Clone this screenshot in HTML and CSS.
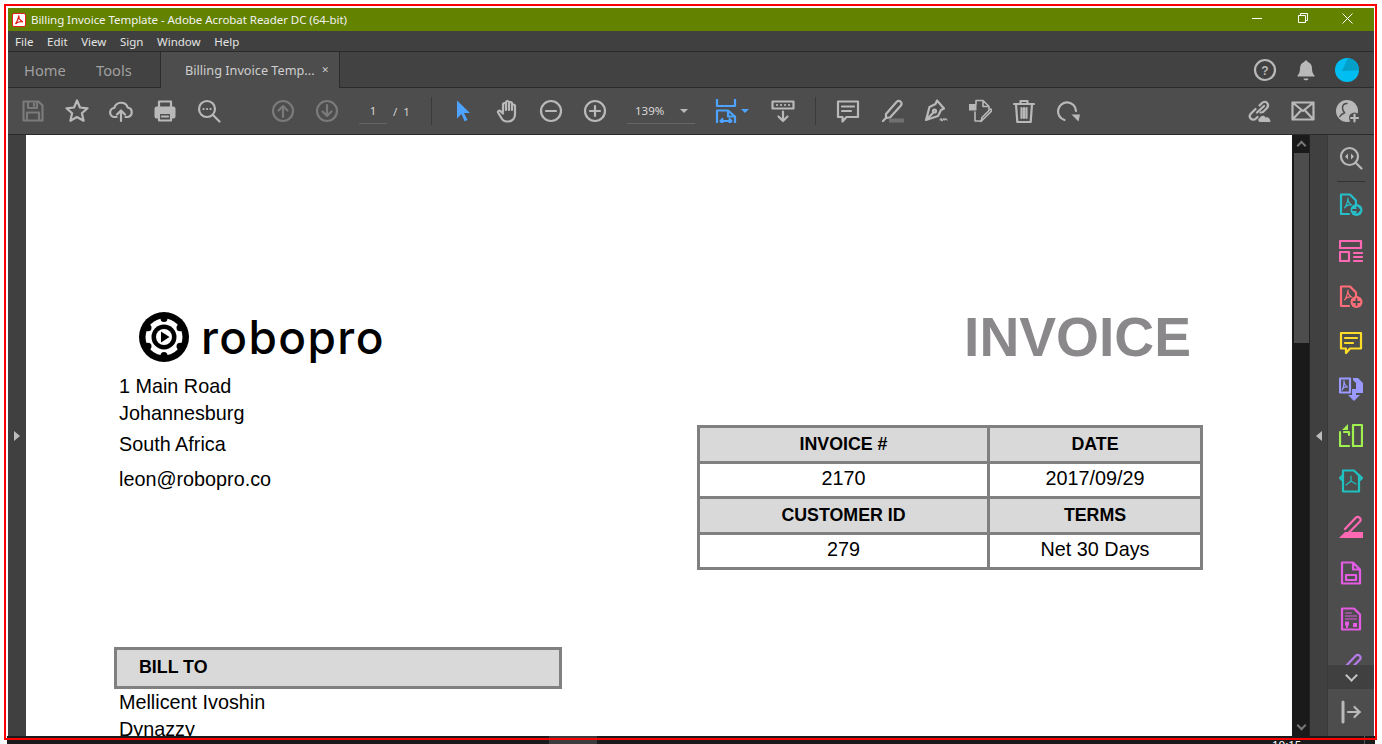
FILE: index.html
```html
<!DOCTYPE html>
<html lang="en">
<head>
<meta charset="UTF-8">
<meta name="viewport" content="width=device-width, initial-scale=1.0">
<title>Billing Invoice Template - Adobe Acrobat Reader DC (64-bit)</title>
<link rel="stylesheet" href="styles.css">
</head>
<body>
<div class="window">

  <div class="titlebar">
    <svg class="app-icon" viewBox="0 0 14 14"><rect x="0.5" y="0.5" width="13" height="13" rx="1.5" fill="#fff" stroke="#e0201c"/><path d="M7 2.500c-.6 2 .6 4.500 3.800 6.300-2.500-.4-5.500.2-7.300 2.200C5 8.800 6.400 5.500 7 2.500z" fill="none" stroke="#e0201c" stroke-width="1.300"/></svg>
    <span class="title-text">Billing Invoice Template - Adobe Acrobat Reader DC (64-bit)</span>
    <div class="win-controls">
      <svg class="win-btn" viewBox="0 0 45 20"><path d="M17 10.500h10" stroke="#fff" fill="none"/></svg>
      <svg class="win-btn" viewBox="0 0 45 20"><path d="M18.500 7.500h7v7h-7zM20.500 7.500v-2h7v7h-2" stroke="#fff" fill="none"/></svg>
      <svg class="win-btn" viewBox="0 0 45 20"><path d="M17.500 5.500l10 10M27.500 5.500l-10 10" stroke="#fff" fill="none"/></svg>
    </div>
  </div>

  <div class="menubar">
    <span>File</span><span>Edit</span><span>View</span><span>Sign</span><span>Window</span><span>Help</span>
  </div>

  <div class="tabbar">
    <span class="nav-tab nav-home">Home</span>
    <span class="nav-tab nav-tools">Tools</span>
    <div class="doc-tab">
      <span>Billing Invoice Temp...</span>
      <span class="tab-close">&#x2715;</span>
    </div>
    <div class="tab-right">
      <svg class="ico" viewBox="0 0 24 24"><circle cx="12" cy="12" r="10"/><text x="12" y="16.500" class="q-mark">?</text></svg>
      <svg class="ico" viewBox="0 0 24 24"><path class="solid" d="M12 2.500c1 0 1.600.6 1.800 1.500 3 .9 4.200 3.500 4.200 6.500 0 3.500 1 5.500 2.500 7v1h-17v-1c1.500-1.500 2.500-3.500 2.500-7 0-3 1.200-5.600 4.200-6.500.2-.9.800-1.500 1.800-1.500zM9.500 20.500h5c0 1-1 1.800-2.500 1.800s-2.500-.8-2.500-1.800z"/></svg>
      <svg class="avatar" viewBox="0 0 24 24"><circle cx="12" cy="12" r="12" fill="#00bdf2"/><path d="M13 0A12 12 0 0 1 24 12.500L7 13z" fill="#029fc9"/></svg>
    </div>
  </div>

  <div class="toolbar">
    <div class="tool-group">
      <button class="btn off"><svg class="ico" viewBox="0 0 24 24"><path d="M2.500 2.500h15l4 4v15h-19zM7 2.500v6.500h9V2.500M13 4.500v2.500M6 21.500v-8h12v8"/></svg></button>
      <button class="btn"><svg class="ico" viewBox="0 0 24 24"><path d="M12 1.500l3 7 7.500.8-5.600 5 1.700 7.500L12 18l-6.600 3.800 1.700-7.500-5.600-5L9 8.500z"/></svg></button>
      <button class="btn"><svg class="ico" viewBox="0 0 24 24"><path d="M7.500 18H6A4.500 4.500 0 0 1 5.300 9a7 7 0 0 1 13.400-.5A4.800 4.800 0 0 1 18.500 18h-2M12 22V11.500M8 15.500l4-4 4 4"/></svg></button>
      <button class="btn"><svg class="ico" viewBox="0 0 24 24"><path d="M6 8V2.500h12V8"/><path class="solid" d="M3.500 7.500h17c1 0 2 1 2 2v8c0 1-1 2-2 2H19v-5.500H5v5.500H3.500c-1 0-2-1-2-2v-8c0-1 1-2 2-2z"/><path d="M6 14h12v7.500H6zM9 17.500h6"/></svg></button>
      <button class="btn"><svg class="ico" viewBox="0 0 24 24"><circle cx="10" cy="10" r="8"/><path d="M16 16l6.500 6.500"/><path class="dots" d="M6.500 10h.1M10 10h.1M13.500 10h.1"/></svg></button>
    </div>
    <div class="tool-group page-nav">
      <button class="btn off"><svg class="ico" viewBox="0 0 24 24"><circle cx="12" cy="12" r="10"/><path d="M12 18V7M7.500 11.500L12 7l4.500 4.500"/></svg></button>
      <button class="btn off"><svg class="ico" viewBox="0 0 24 24"><circle cx="12" cy="12" r="10"/><path d="M12 6v11M7.500 12.500L12 17l4.500-4.500"/></svg></button>
      <span class="page-input">1</span>
      <span class="page-total">/&nbsp;&nbsp;1</span>
    </div>
    <i class="divider first"></i>
    <div class="tool-group">
      <button class="btn"><svg class="ico blue" viewBox="0 0 24 24"><path class="solid" d="M6 1.500l13 12.500h-6l3.500 7-3 1.300-3-7.300L6 19.500z"/></svg></button>
      <button class="btn"><svg class="ico" viewBox="0 0 24 24"><path d="M8 13V5.500a1.500 1.500 0 0 1 3 0V11M11 11V3.500a1.500 1.500 0 0 1 3 0V11M14 11V4.500a1.500 1.500 0 0 1 3 0V11M17 11V7a1.500 1.500 0 0 1 3 0v8.500c0 3.500-2.500 7-6.500 7h-1.500c-3 0-4.500-1.500-5.800-3.800l-3-5c-.8-1.500 1.200-2.700 2.400-1.500L8 14.500"/></svg></button>
      <button class="btn"><svg class="ico" viewBox="0 0 24 24"><circle cx="12" cy="12" r="10"/><path d="M7 12h10"/></svg></button>
      <button class="btn"><svg class="ico" viewBox="0 0 24 24"><circle cx="12" cy="12" r="10"/><path d="M7 12h10M12 7v10"/></svg></button>
    </div>
    <div class="zoom-box">
      <span class="zoom-value">139%</span>
      <i class="caret"></i>
    </div>
    <button class="btn fit"><svg class="ico blue" viewBox="0 0 24 24"><path d="M3 0v7h18V0M3 25V11.500h11l7 6V25M14 11.500v6h7M6.500 22h11M8.500 20l-2 2 2 2M15.500 20l2 2-2 2"/></svg></button>
    <i class="caret blue-caret"></i>
    <button class="btn keys"><svg class="ico" viewBox="0 0 24 24"><path d="M1.500 2.500h21v7h-21zM12 12.500v9.500M7.500 17.500L12 22l4.500-4.500"/><path class="dots thin" d="M6 6h.1M10 6h.1M14 6h.1M18 6h.1"/></svg></button>
    <i class="divider"></i>
    <div class="tool-group edit-tools">
      <button class="btn"><svg class="ico" viewBox="0 0 24 24"><path d="M2 2.500h20v15.500H10.500L6.500 22.500V18H2zM6 7.500h12M6 12h9"/></svg></button>
      <button class="btn"><svg class="ico" viewBox="0 0 24 24"><path d="M6 15L16.500 3c1.300-1.300 3-1.300 4.200-.2s1.300 2.800 0 4L10 18.500 6 19zM6 19l-3 3"/><path class="dim" d="M9 21.500h15"/></svg></button>
      <button class="btn"><svg class="ico" viewBox="0 0 24 24"><path d="M13 1.500L11.500 5 5.500 8 2 21l12-4 3-6 3-1.500zM2.500 20.500L9 14"/><circle cx="10.500" cy="12" r="1.500"/><path class="thin" d="M16 21c1-2 1.500-2 1.500 0s1.500 0 2-1 1 1 1 1 1-2 1.500-1 1 1 1 1"/></svg></button>
      <button class="btn"><svg class="ico" viewBox="0 0 24 24"><path class="mid" d="M8 5V1.500h7l6 6v3M15 1.500v6h6M7 13v9h6"/><path class="solid" d="M1 5h7.500v6.500H1z"/><path class="mid" d="M13 22.500l1-4 8-8c1-1 2.500.5 1.500 1.500l-8 8z"/></svg></button>
      <button class="btn"><svg class="ico" viewBox="0 0 24 24"><path d="M2 5h20M8.500 5V2h7v3M4 5l1.300 18h13.400L20 5M9.500 9v10M12 9v10M14.500 9v10"/></svg></button>
      <button class="btn"><svg class="ico" viewBox="0 0 24 24"><path d="M8.500 21A9 9 0 1 1 20 12"/><path class="solid" d="M15.500 15.500h8.500l-1.500 7z"/></svg></button>
    </div>
    <div class="tool-group share-tools">
      <button class="btn"><svg class="ico" viewBox="0 0 24 24"><path d="M10 13.500l7-6.500M8.500 10L4 14.500c-3.500 3.500 1.500 8.500 5 5l1.500-1.500"/><path d="M12.500 6.500L15 4c3.500-3.500 8 1 5 5l-4 4-2.500.5"/><path class="solid" d="M13 23c-2 0-2.500-3.500 0-4 .5-2.500 4.500-3 5.500-.5 2-1 5 .5 5 4.500z"/></svg></button>
      <button class="btn"><svg class="ico" viewBox="0 0 24 24"><path d="M1.500 3.500h21v17h-21zM1.500 3.500L12 12l10.500-8.500M1.500 20.500l8-8.500M22.500 20.500l-8-8.500"/></svg></button>
      <button class="btn"><svg class="ico" viewBox="0 0 24 24"><circle class="solid" cx="12" cy="12" r="11"/><path class="hole" d="M12 4.500c-3 0-4.500 2-4.500 4.500 0 2 .8 3.800 2.200 4.800-1.800.7-3.800 1.800-4.800 3.700"/><circle class="patch" cx="19.500" cy="19" r="5.500"/><path d="M19.500 15.500v7M16 19h7"/></svg></button>
    </div>
  </div>

  <div class="viewer">
    <div class="side-panel"><i class="arrow-right"></i></div>

    <div class="page">
      <div class="doc-head">
        <div class="sender">
          <div class="logo">
            <svg class="logo-mark" viewBox="0 0 50 50">
              <circle cx="25" cy="25" r="25" fill="#000"/>
              <circle cx="25" cy="25" r="18.500" fill="#fff"/>
              <g fill="#000">
                <circle cx="25" cy="6.500" r="3.500"/><circle cx="25" cy="43.500" r="3.500"/>
                <circle cx="9" cy="15.800" r="3.500"/><circle cx="41" cy="15.800" r="3.500"/>
                <circle cx="9" cy="34.200" r="3.500"/><circle cx="41" cy="34.200" r="3.500"/>
                <circle cx="25" cy="25" r="12.500"/>
              </g>
              <circle cx="25" cy="25" r="8" fill="#fff"/>
              <path d="M22 19.500l8.500 5.500-8.500 5.500z" fill="#000"/>
            </svg>
            <span class="logo-name">robopro</span>
          </div>
          <p class="addr">1 Main Road</p>
          <p class="addr addr-city">Johannesburg</p>
          <p class="addr addr-country">South Africa</p>
          <p class="addr addr-mail">leon@robopro.co</p>
        </div>
        <div class="invoice-side">
          <div class="invoice-title">INVOICE</div>
          <table class="invoice-meta">
            <tr><th class="col-a">INVOICE #</th><th>DATE</th></tr>
            <tr><td>2170</td><td>2017/09/29</td></tr>
            <tr><th>CUSTOMER ID</th><th>TERMS</th></tr>
            <tr><td>279</td><td>Net 30 Days</td></tr>
          </table>
        </div>
      </div>
      <div class="bill-to">BILL TO</div>
      <p class="customer">Mellicent Ivoshin</p>
      <p class="customer">Dynazzy</p>
    </div>

    <div class="scrollbar">
      <i class="chev chev-up"></i>
      <div class="thumb"></div>
      <i class="chev chev-down"></i>
    </div>

    <div class="side-panel right-panel"><i class="arrow-left"></i></div>

    <div class="tools-rail">
      <div class="tools-list">
        <div class="tool"><svg class="ico" viewBox="0 0 24 24"><circle cx="10.500" cy="10.500" r="8.500"/><path d="M17 17l5.500 5.500"/><path class="solid" d="M9 7.500v6L6 10.500zM12 7.500v6l3-3z"/></svg></div>
        <div class="tool-sep"></div>
        <div class="tool c-teal"><svg class="ico" viewBox="0 0 24 24"><path d="M10 21H2V1.500h9l6 6v4"/><path class="thin" d="M9 5c-.5 3 .5 5 3.500 7-3-.5-5.500.5-7 3 2-2.500 3-6 3.500-10z"/><circle class="solid" cx="17.500" cy="17" r="6"/><path class="cut" d="M14 17h6M18 14.500l2.500 2.500-2.500 2.500"/></svg></div>
        <div class="tool c-pink"><svg class="ico" viewBox="0 0 24 24"><path d="M1 2h21v7H1zM1 13h9v9H1zM15 14h8M15 18h8M15 22h8"/></svg></div>
        <div class="tool c-coral"><svg class="ico" viewBox="0 0 24 24"><path d="M10 21H2V1.500h9l6 6v4"/><path class="thin" d="M9 5c-.5 3 .5 5 3.500 7-3-.5-5.500.5-7 3 2-2.500 3-6 3.500-10z"/><circle class="solid" cx="17.500" cy="17" r="6"/><path class="cut" d="M14.500 17h6M17.500 14v6"/></svg></div>
        <div class="tool c-yellow"><svg class="ico" viewBox="0 0 24 24"><path d="M2 2h20v15.500H11L7 22v-4.500H2z"/><path d="M6 7h12M6 12h8"/></svg></div>
        <div class="tool c-violet"><svg class="ico" viewBox="0 0 24 24"><path d="M1 1.500h10l0 14H1z"/><path class="thin" d="M5 3.500c0 3 1 5 3.500 6.500-3-.5-4.500.5-5.500 3 1.500-2 2-6 2-9.500z"/><path class="solid" d="M14 1h5l5 5v10h-7V6l-3-3zM9 18h4v-6h4v6h4l-6 6z"/></svg></div>
        <div class="tool c-lime"><svg class="ico" viewBox="0 0 24 24"><path d="M14 2h9v21h-9zM1 23h9M1 9v14M10 9v3M1 12h.1M5 9h5"/><path class="solid" d="M9 1v6H3z"/></svg></div>
        <div class="tool c-aqua"><svg class="ico" viewBox="0 0 24 24"><path d="M4 1.500h11l5 5v16H4zM4 6L1 9l3 3M20 6l3 3-3 3"/><path class="thin" d="M12 7v5l-5 4M12 12l5 3"/></svg></div>
        <div class="tool c-pink"><svg class="ico" viewBox="0 0 24 24"><path d="M6 14L16.500 3c1.300-1.300 3-1.300 4.200-.2s1.300 2.800 0 4L10 17.500"/><path class="solid" d="M0 23l6-6h18v6z"/></svg></div>
        <div class="tool c-magenta"><svg class="ico" viewBox="0 0 24 24"><path d="M3 1.500h11l7 7v14H3zM14 1.500v7h7M7 14h10v5H7z"/></svg></div>
        <div class="tool c-magenta"><svg class="ico" viewBox="0 0 24 24"><path d="M3 1.500h12l6 6v15H3z"/><path class="thin" d="M6.500 6h6M6.500 9h11M6.500 12h11"/><path class="solid" d="M6 14.500h4v4H9v2.500H7v-2.500H6zM14 16h4v4h-4z"/></svg></div>
        <div class="tool c-purple"><svg class="ico" viewBox="0 0 24 24"><path d="M6 14L16.500 3c1.300-1.300 3-1.300 4.200-.2s1.300 2.800 0 4L10 17.500"/><path class="solid" d="M0 23l6-6h18v6z"/></svg></div>
      </div>
      <div class="rail-toggle"><i class="chev chev-big"></i></div>
      <div class="rail-foot"><svg class="ico" viewBox="0 0 24 24"><path class="heavy" d="M4 2v20"/><path d="M9 12h12M15.500 7l5 5-5 5"/></svg></div>
    </div>
  </div>
</div>

<div class="taskbar">
  <i class="task-item"></i>
  <span class="clock">10:15</span>
  <i class="task-edge"></i>
</div>

<div class="annotation"></div>
</body>
</html>
```

FILE: styles.css
```css
* {
  box-sizing: border-box;
}

html, body {
  height: 744px;
  overflow: hidden;
}

body {
  margin: 0;
  padding: 8px 8px 0 8px;
  background: #fff;
  font-family: "Noto Sans", Arial, sans-serif;
}

/* red box drawn over the whole screenshot */
.annotation {
  position: absolute;
  left: 4px;
  top: 4px;
  width: 1373px;
  height: 736px;
  border: 2px solid #f00;
  pointer-events: none;
}

.window {
  height: 728px;
  display: flex;
  flex-direction: column;
  overflow: hidden;
}

.titlebar {
  height: 23px;
  flex: none;
  display: flex;
  align-items: center;
  background: #638200;
  color: #f2f2f2;
  font-size: 11.5px;
  letter-spacing: -0.05px;
  padding-left: 4px;
}

.app-icon {
  width: 14px;
  height: 14px;
  margin-right: 5px;
}

.win-controls {
  margin-left: auto;
  display: flex;
  padding-right: 4px;
  margin-top: -3px;
}

.win-btn {
  width: 45px;
  height: 20px;
}

.menubar {
  height: 21px;
  flex: none;
  display: flex;
  align-items: center;
  gap: 13.6px;
  padding-left: 7px;
  background: #404040;
  border-bottom: 1px solid #2b2b2b;
  color: #e4e4e4;
  font-size: 11.5px;
}

.tabbar {
  height: 36px;
  flex: none;
  display: flex;
  align-items: center;
  background: #424242;
  border-bottom: 1px solid #2b2b2b;
  padding-left: 16px;
}

.nav-tab {
  font-size: 14.7px;
  color: #a0a0a0;
}

.nav-home {
  width: 72px;
}

.nav-tools {
  width: 64px;
}

.doc-tab {
  width: 180px;
  height: 36px;
  margin-bottom: -1px;
  display: flex;
  align-items: center;
  padding-left: 24px;
  background: #4d4d4d;
  border-left: 1px solid #2b2b2b;
  border-right: 1px solid #2b2b2b;
  color: #cfcfcf;
  font-size: 12.7px;
}

.tab-close {
  margin-left: 7px;
  font-size: 9px;
  font-weight: bold;
  font-family: "DejaVu Sans", sans-serif;
  color: #c8c8c8;
}

.tab-right {
  margin-left: auto;
  display: flex;
  align-items: center;
  padding-right: 15px;
  color: #b9b9b9;
}

.tab-right .ico {
  margin-right: 17px;
}

.avatar {
  width: 24px;
  height: 24px;
}

.q-mark {
  font-family: "Liberation Sans", sans-serif;
  font-size: 12px;
  font-weight: bold;
  text-anchor: middle;
  fill: #b9b9b9;
  stroke: none;
}

.toolbar {
  height: 47px;
  flex: none;
  display: flex;
  align-items: center;
  background: #4d4d4d;
  border-bottom: 1px solid #2b2b2b;
  padding-left: 3px;
  color: #b9b9b9;
}

.tool-group {
  display: flex;
  align-items: center;
}

.btn {
  width: 44px;
  height: 44px;
  padding: 0;
  border: none;
  background: none;
  color: #b9b9b9;
  display: flex;
  align-items: center;
  justify-content: center;
}

.btn.off {
  color: #7a7a7a;
}

.ico {
  width: 24px;
  height: 24px;
  fill: none;
  stroke: currentColor;
  stroke-width: 2.200;
  stroke-linecap: round;
  stroke-linejoin: round;
  flex: none;
}

.ico .solid {
  fill: currentColor;
  stroke: none;
}

.ico .thin {
  stroke-width: 1.200;
}

.ico .mid {
  stroke-width: 1.600;
}

.ico .dots {
  stroke-width: 2.200;
}

.ico .dim {
  stroke: #707070;
  stroke-width: 4;
  stroke-linecap: butt;
}

.ico .cut {
  stroke: #4d4d4d;
  stroke-width: 1.800;
}

.ico .hole {
  stroke: #4d4d4d;
  stroke-width: 1.500;
}

.ico .patch {
  fill: #4d4d4d;
  stroke: none;
}

.ico .heavy {
  stroke-width: 3;
}

.ico.blue {
  color: #4da3ff;
}

.page-nav {
  margin-left: 30px;
}

.page-input {
  width: 28px;
  height: 25px;
  margin-left: 10px;
  border-bottom: 1px solid #666;
  color: #d8d8d8;
  font-size: 11.5px;
  line-height: 24px;
  text-align: center;
}

.page-total {
  margin-left: 6px;
  color: #d0d0d0;
  font-size: 11.5px;
  width: 28px;
}

.divider {
  width: 1px;
  height: 28px;
  background: #3a3a3a;
  flex: none;
}

.divider.first {
  margin-left: -6px;
  margin-right: 9px;
}

.zoom-box {
  width: 68px;
  height: 25px;
  margin-left: 10px;
  padding-left: 8px;
  display: flex;
  align-items: center;
  border-bottom: 1px solid #666;
  color: #d8d8d8;
  font-size: 11.5px;
}

.zoom-value {
  width: 45px;
}

.caret {
  width: 0;
  height: 0;
  border-left: 4px solid transparent;
  border-right: 4px solid transparent;
  border-top: 4px solid #b9b9b9;
}

.fit {
  margin-left: 9px;
}

.blue-caret {
  border-top-color: #4da3ff;
  margin: 0 0 0 -7px;
}

.keys {
  margin-left: 12px;
}

.toolbar > .divider {
  margin-left: 10px;
}

.edit-tools {
  margin-left: 10px;
}

.share-tools {
  margin-left: auto;
  padding-right: 5px;
}

.viewer {
  flex: 1;
  min-height: 0;
  display: flex;
}

.side-panel {
  width: 18px;
  flex: none;
  background: #404040;
  display: flex;
  align-items: center;
  justify-content: center;
}

.arrow-right {
  width: 0;
  height: 0;
  border-top: 5px solid transparent;
  border-bottom: 5px solid transparent;
  border-left: 6px solid #bdbdbd;
}

.arrow-left {
  width: 0;
  height: 0;
  border-top: 5px solid transparent;
  border-bottom: 5px solid transparent;
  border-right: 6px solid #bdbdbd;
}

.page {
  flex: 1;
  min-width: 0;
  overflow: hidden;
  background: #fff;
  padding: 172px 88px 0 88px;
  color: #000;
  font-family: "Liberation Sans", Arial, sans-serif;
}

.page p {
  margin: 0;
}

.doc-head {
  display: flex;
  justify-content: space-between;
  height: 262px;
}

.sender {
  padding: 5px 0 0 5px;
}

.logo {
  height: 50px;
  margin: 0 0 13px 20px;
  display: flex;
  align-items: center;
}

.logo-mark {
  width: 50px;
  height: 50px;
  flex: none;
}

.logo-name {
  margin-left: 12px;
  font-family: Inter, sans-serif;
  font-size: 46px;
  font-weight: 500;
  letter-spacing: 1.400px;
  line-height: 50px;
}

.addr {
  font-size: 19.800px;
  line-height: 22px;
}

.addr-city {
  margin-top: 5px !important;
}

.addr-country {
  margin-top: 9px !important;
}

.addr-mail {
  margin-top: 13px !important;
}

.invoice-side {
  width: 506px;
  margin-right: 1px;
}

.invoice-title {
  height: 60px;
  margin-bottom: 58px;
  padding-right: 12px;
  text-align: right;
  font-size: 55.200px;
  line-height: 60px;
  font-weight: bold;
  color: #8b888c;
}

.invoice-meta {
  width: 506px;
  border-collapse: collapse;
  table-layout: fixed;
}

.invoice-meta th,
.invoice-meta td {
  height: 35.500px;
  border: 3px solid #808080;
  text-align: center;
}

.invoice-meta th {
  padding: 0;
  background: #d9d9d9;
  font-size: 17.800px;
}

.invoice-meta td {
  padding: 0 0 2px 0;
  font-size: 19.800px;
}

.col-a {
  width: 290px;
}

.bill-to {
  width: 448px;
  height: 42px;
  margin-top: 78px;
  padding: 6px 0 0 22px;
  border: 3px solid #808080;
  background: #d9d9d9;
  font-size: 17.800px;
  font-weight: bold;
  line-height: 22px;
}

.customer {
  padding-left: 5px;
  font-size: 19.800px;
  line-height: 27px;
}

.scrollbar {
  width: 18px;
  flex: none;
  background: #1a1a1a;
  border-right: 1px solid #222;
  display: flex;
  flex-direction: column;
  align-items: center;
  padding-left: 2px;
}

.thumb {
  width: 15px;
  height: 190px;
  background: #4d4d4d;
  margin-top: 7px;
}

.chev {
  width: 7px;
  height: 7px;
  border-left: 2px solid #777;
  border-top: 2px solid #777;
  flex: none;
}

.chev-up {
  transform: rotate(45deg);
  margin-top: 7px;
  margin-bottom: -3px;
}

.chev-down {
  transform: rotate(225deg);
  margin-top: auto;
  margin-bottom: 7px;
}

.right-panel {
  border-right: 1px solid #3a3a3a;
}

.tools-rail {
  width: 46px;
  flex: none;
  display: flex;
  flex-direction: column;
  background: #4d4d4d;
  color: #b9b9b9;
}

.tools-list {
  height: 530px;
  flex: none;
  overflow: hidden;
}

.tool {
  height: 46px;
  display: flex;
  align-items: center;
  justify-content: center;
}

.tool-sep {
  height: 1px;
  margin: 0 9px;
  background: #333;
}

.c-teal { color: #26bfc9; }
.c-pink { color: #ff69b4; }
.c-coral { color: #ff6e78; }
.c-yellow { color: #ffdc28; }
.c-violet { color: #9999ff; }
.c-lime { color: #a0f050; }
.c-aqua { color: #1fc1c1; }
.c-magenta { color: #e45be4; }
.c-purple { color: #b57be8; }

.rail-toggle {
  height: 24px;
  flex: none;
  background: #404040;
  display: flex;
  align-items: center;
  justify-content: center;
}

.chev-big {
  width: 9px;
  height: 9px;
  border-color: #c4c4c4;
  transform: rotate(225deg);
  margin-top: -4px;
}

.rail-foot {
  flex: 1;
  display: flex;
  align-items: center;
  justify-content: center;
  padding-bottom: 1px;
}

.taskbar {
  height: 8px;
  margin-right: -1px;
  background: #1a1a1a;
  display: flex;
  overflow: hidden;
  margin-left: -1px;
}

.task-item {
  width: 48px;
  margin-left: 542px;
  background: #3c3c3c;
}

.clock {
  margin-left: 675px;
  color: #fff;
  font-size: 11.500px;
  line-height: 18px;
  width: 92px;
  font-family: "Noto Sans", Arial, sans-serif;
}

.task-edge {
  width: 1px;
  background: #555;
}
```
